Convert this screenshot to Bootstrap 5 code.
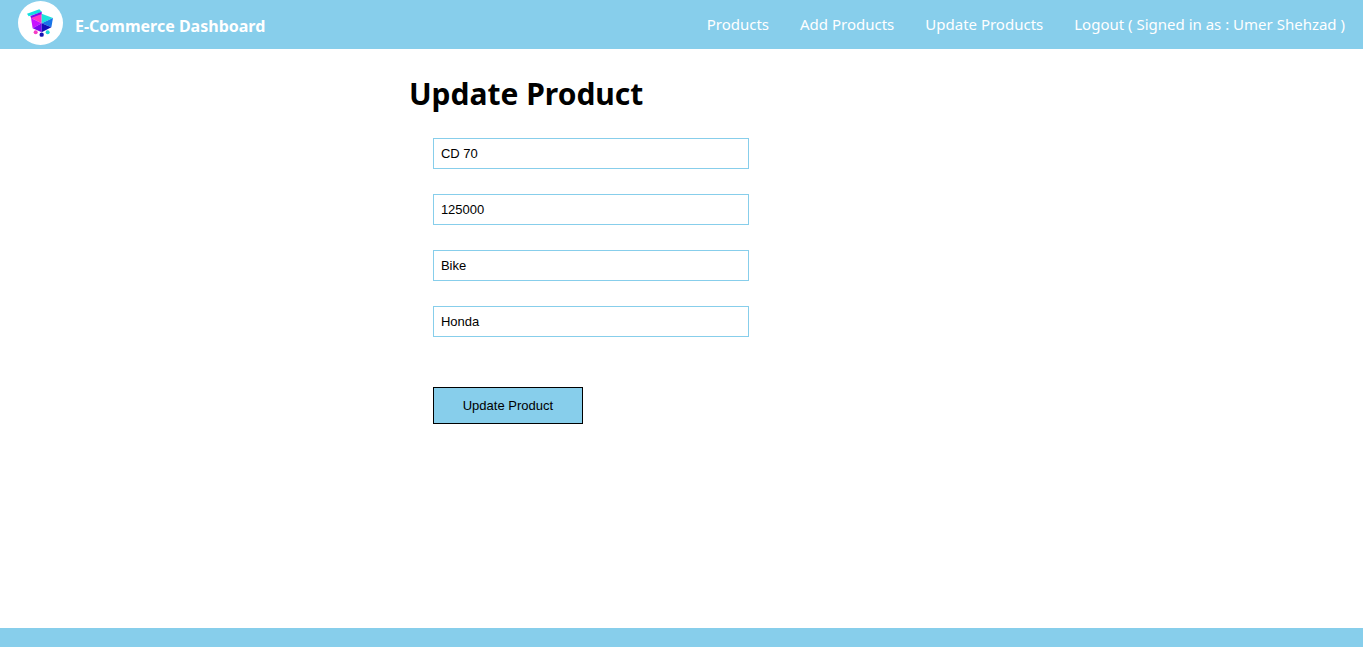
<!DOCTYPE html>
<html lang="en">
<head>
<meta charset="utf-8">
<meta name="viewport" content="width=device-width, initial-scale=1">
<title>E-Commerce Dashboard</title>
<link href="https://cdn.jsdelivr.net/npm/bootstrap@5.3.0/dist/css/bootstrap.min.css" rel="stylesheet">
<style>
  body { font-family: "Segoe UI", "Noto Sans", "Open Sans", sans-serif; color: #000; background: #fff; }
  .bar-sky { background: skyblue; }
  .top-bar { min-height: 49px; padding: 1px 18px 4px; }
  .brand-text { font-size: 16px; line-height: 24px; padding-top: 5px; }
  .top-links { column-gap: 31px; font-size: 15px; line-height: 24px; padding-top: 2px; }
  .product-area { padding-left: 30%; padding-top: 21px; }
  .page-title { font-size: 30px; line-height: 48px; margin-bottom: 20px; }
  .product-form { padding-left: 24px; }
  .field, .submit-btn { font-family: "Liberation Sans", Arial, sans-serif; font-size: 13px; color: #000; }
  .field { width: 316px; max-width: 100%; height: 31px; padding: 0 7px; border: 1px solid skyblue; margin-bottom: 25px; }
  .submit-btn { width: 150px; height: 37px; margin-top: 25px; padding: 0; border: 1px solid #000; background: skyblue; }
  .submit-btn:hover { background: #6fc1e2; }
  .bottom-bar { height: 19px; }
</style>
</head>
<body class="d-flex flex-column min-vh-100">
  <header class="navbar bar-sky top-bar align-items-center">
    <a href="#" class="d-flex align-items-center gap-2 text-white text-decoration-none">
      <svg width="45" height="44" viewBox="24 3 135 132" role="img" aria-label="Logo">
        <ellipse cx="91.500" cy="69" rx="67.500" ry="66" fill="#fff"/>
        <path d="M51 41 88 28 96 36 56 49z" fill="#12e0e0"/>
        <path d="M61 48 95 35V44L64 56z" fill="#7a0cf0"/>
        <path d="M63 54 95 42V70z" fill="#ff35c4"/>
        <path d="M63 54 95 70 68 85z" fill="#c812ff"/>
        <path d="M68 85 95 70V97z" fill="#7b05ee"/>
        <path d="M95 41 129 54 95 70z" fill="#1ee3dc"/>
        <path d="M129 54 124 82 95 70z" fill="#1874e8"/>
        <path d="M95 70 124 82 95 97z" fill="#1010b8"/>
        <circle cx="77" cy="97" r="6" fill="#f53cc5"/>
        <circle cx="95" cy="104" r="6.500" fill="#1414b4"/>
        <circle cx="113" cy="97" r="6" fill="#1cd5d2"/>
      </svg>
      <span class="brand-text fw-bold ms-1">E-Commerce Dashboard</span>
    </a>
    <nav class="top-links d-flex flex-wrap">
      <a href="#" class="text-white text-decoration-none">Products</a>
      <a href="#" class="text-white text-decoration-none">Add Products</a>
      <a href="#" class="text-white text-decoration-none">Update Products</a>
      <a href="#" class="text-white text-decoration-none">Logout ( Signed in as : Umer Shehzad )</a>
    </nav>
  </header>
  <main class="product-area flex-grow-1">
    <h1 class="page-title fw-bold">Update Product</h1>
    <form class="product-form d-flex flex-column align-items-start">
      <input class="field" type="text" value="CD 70" aria-label="Product name">
      <input class="field" type="text" value="125000" aria-label="Product price">
      <input class="field" type="text" value="Bike" aria-label="Product category">
      <input class="field" type="text" value="Honda" aria-label="Product company">
      <button class="submit-btn" type="button">Update Product</button>
    </form>
  </main>
  <footer class="bar-sky bottom-bar"></footer>
  <script src="https://cdn.jsdelivr.net/npm/bootstrap@5.3.0/dist/js/bootstrap.bundle.min.js"></script>
</body>
</html>
